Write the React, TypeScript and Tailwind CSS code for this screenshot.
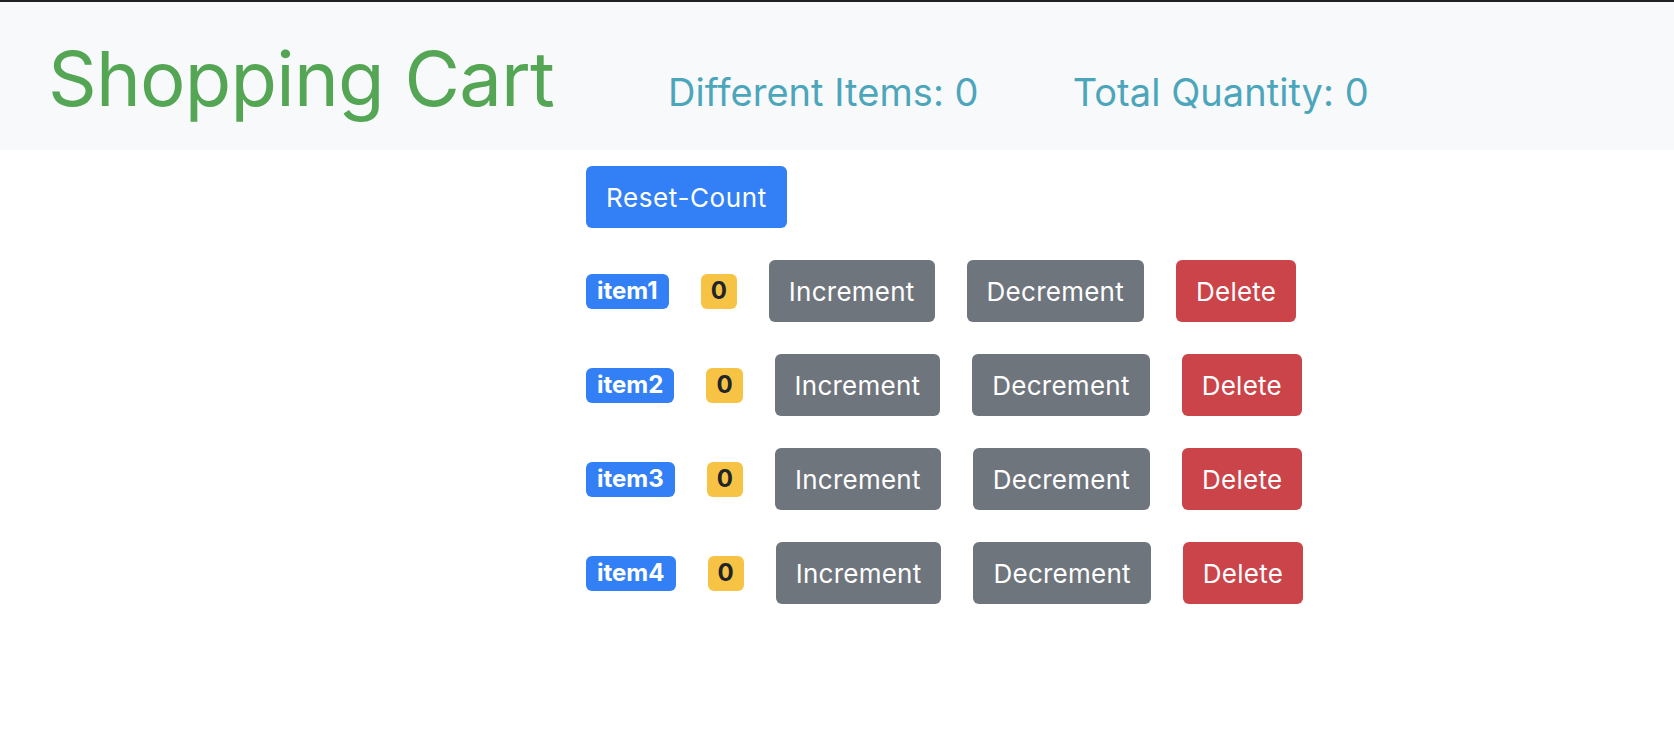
import React from "react";

const items = [
  { id: 1, name: "item1", count: 0 },
  { id: 2, name: "item2", count: 0 },
  { id: 3, name: "item3", count: 0 },
  { id: 4, name: "item4", count: 0 },
];

export default function App() {
  return (
    <div className="min-h-[744px] bg-white" style={{ fontFamily: "Inter, 'Noto Sans', sans-serif" }}>
      <header className="flex h-[150px] items-baseline border-t-2 border-[#212121] bg-[#f8f9fa] pt-[38px]">
        <h1 className="ml-[48px] text-[76px] leading-none font-normal tracking-[-0.8px] text-[#54a655]">
          Shopping Cart
        </h1>
        <span className="ml-[114px] text-[38px] leading-none tracking-[0.05px] text-[#4ca6bb]">Different Items: 0</span>
        <span className="ml-[94px] text-[38px] leading-none tracking-[0.05px] text-[#4ca6bb]">Total Quantity: 0</span>
      </header>
      <main className="ml-[586px] pt-[16px]">
        <button className="h-[62px] rounded-[6px] bg-[#3380f6] px-[20px] text-[26px] tracking-[0.6px] text-white">
          Reset-Count
        </button>
        {items.map((it) => (
          <div key={it.id} className="mt-[32px] flex items-center gap-[32px]">
            <span className="flex h-[35px] items-center rounded-[6px] bg-[#3380f6] px-[11px] text-[24px] leading-none font-bold text-white">
              {it.name}
            </span>
            <span className="flex h-[35px] items-center rounded-[6px] bg-[#f6c344] px-[10px] text-[24px] leading-none font-bold text-[#212529]">
              {it.count}
            </span>
            <button className="h-[62px] rounded-[6px] bg-[#6f757d] px-[20px] text-[26px] tracking-[0.25px] text-white">Increment</button>
            <button className="h-[62px] rounded-[6px] bg-[#6f757d] px-[20px] text-[26px] tracking-[0.25px] text-white">Decrement</button>
            <button className="h-[62px] rounded-[6px] bg-[#cb444a] px-[20px] text-[26px] tracking-[0.25px] text-white">Delete</button>
          </div>
        ))}
      </main>
    </div>
  );
}
